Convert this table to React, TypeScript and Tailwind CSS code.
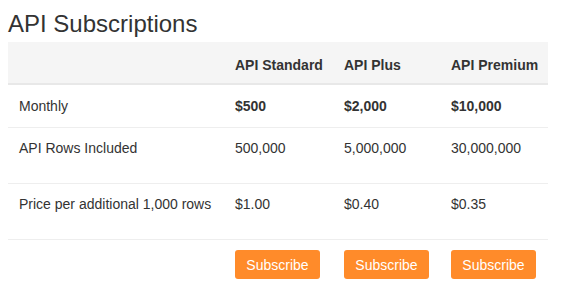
import React from "react";

type Row = {
  label: string;
  values: string[];
  bold?: boolean;
  height: string;
  pad: string;
};

const plans = ["API Standard", "API Plus", "API Premium"];

const rows: Row[] = [
  { label: "Monthly", values: ["$500", "$2,000", "$10,000"], bold: true, height: "h-[43px]", pad: "pt-[11px]" },
  { label: "API Rows Included", values: ["500,000", "5,000,000", "30,000,000"], height: "h-[56px]", pad: "pt-[10px]" },
  { label: "Price per additional 1,000 rows", values: ["$1.00", "$0.40", "$0.35"], height: "h-[56px]", pad: "pt-[10px]" },
];

const cols = "grid grid-cols-[216px_109px_107px_1fr] pl-[11px]";

export default function App() {
  return (
    <div
      className="w-[568px] h-[297px] bg-white pl-[8px] pr-[20px] text-[#333]"
      style={{ fontFamily: '"Liberation Sans", Arial, sans-serif' }}
    >
      <h1 className="pt-[11px] text-[24px] leading-[26px] font-normal text-[#333]">API Subscriptions</h1>

      <div className="mt-[5px]">
        {/* header */}
        <div className={`${cols} h-[43px] bg-[#f5f5f5] border-b-2 border-[#e8e8e8] items-end pb-[8px] text-[14px] leading-[20px] font-bold`}>
          <div />
          {plans.map((p) => (
            <div key={p}>{p}</div>
          ))}
        </div>

        {rows.map((r) => (
          <div
            key={r.label}
            className={`${cols} ${r.height} ${r.pad} border-b border-[#eeeeee] text-[14px] leading-[20px]`}
          >
            <div>{r.label}</div>
            {r.values.map((v) => (
              <div key={v} className={r.bold ? "font-bold" : ""}>
                {v}
              </div>
            ))}
          </div>
        ))}

        <div className={`${cols} pt-[10px]`}>
          <div />
          {plans.map((p) => (
            <div key={p}>
              <button className="w-[85px] h-[29px] rounded-[3px] bg-[#ff8b2a] text-white text-[14px] leading-[20px]">
                Subscribe
              </button>
            </div>
          ))}
        </div>
      </div>
    </div>
  );
}
